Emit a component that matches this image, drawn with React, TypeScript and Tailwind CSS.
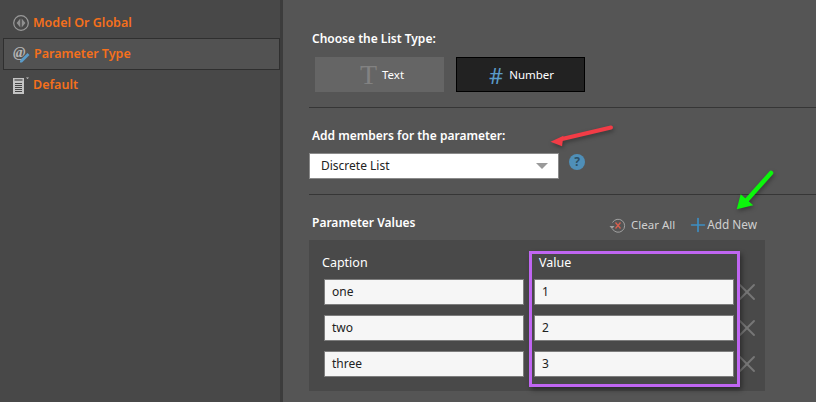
import { Plus, X } from 'lucide-react';

const rows = [
  { caption: 'one', value: '1' },
  { caption: 'two', value: '2' },
  { caption: 'three', value: '3' },
];

function ModelIcon() {
  return (
    <svg width="16" height="16" viewBox="0 0 16 16" className="shrink-0">
      <circle cx="8" cy="8" r="7.3" fill="none" stroke="#9a9a9a" strokeWidth="1.2" />
      <path d="M7.3 3.5v9L3.600 8zM8.700 3.500v9L12.400 8z" fill="#8f8f8f" />
    </svg>
  );
}

function ParamIcon() {
  return (
    <svg width="18" height="18" viewBox="0 0 18 18" className="shrink-0">
      <text x="0" y="12" fontSize="15" fontStyle="italic" fill="#b4b4b4" fontFamily="Liberation Serif, serif">@</text>
      <path d="M7 15.500l7.500-7.500 2 2-7.500 7.500H7z" fill="#5b9bc8" />
    </svg>
  );
}

function DefaultIcon() {
  return (
    <svg width="16" height="17" viewBox="0 0 16 17" className="shrink-0">
      <rect x="0" y="1" width="11" height="16" fill="#c4c4c4" />
      <path d="M2 6.500h7M2 8.500h7M2 10.500h7M2 12.500h7M2 14.500h7" stroke="#444" strokeWidth="1" />
      <path d="M1.500 3h8" stroke="#777" strokeWidth="2" />
      <path d="M13 0.500h3l-1.500 1.600z" fill="#c8c8c8" />
    </svg>
  );
}

function ClearIcon() {
  return (
    <svg width="17" height="17" viewBox="0 0 17 17" className="shrink-0">
      <path d="M3.500 5.500A6.500 6.500 0 1 1 3.500 12" fill="none" stroke="#a0a0a0" strokeWidth="1" />
      <path d="M0.500 9h5L3 12z" fill="#a0a0a0" />
      <path d="M6.500 5.500l5 6M11.500 5.500l-5 6" stroke="#d8604f" strokeWidth="1.300" />
    </svg>
  );
}

function CellInput({ text }: { text: string }) {
  return (
    <div className="flex h-[26px] w-[200px] items-center border border-[#7d7d7d] bg-[#f6f6f6] pl-[7px] text-[12px] text-[#222]">
      {text}
    </div>
  );
}

export default function App() {
  return (
    <div className="relative flex h-[402px] w-[816px] overflow-hidden bg-[#555555] font-['Noto_Sans','Open_Sans',sans-serif] text-[12px]">
      {/* Sidebar */}
      <div className="w-[283px] shrink-0 border-r-[3px] border-[#3c3c3c] bg-[#484848] pt-[8px] text-[12.5px] font-semibold text-[#f5701c]">
        <div className="flex h-[30px] items-center gap-[4px] pl-[13px]">
          <ModelIcon />
          <span>Model Or Global</span>
        </div>
        <div className="ml-[3px] flex h-[32px] items-center gap-[3px] border border-[#2f2f2f] bg-[#525252] pl-[9px]">
          <ParamIcon />
          <span>Parameter Type</span>
        </div>
        <div className="flex h-[30px] items-center gap-[4px] pl-[13px]">
          <DefaultIcon />
          <span>Default</span>
        </div>
      </div>

      {/* Main */}
      <div className="flex-1 pl-[26px] pt-[30px]">
        <div className="pl-[3px] font-semibold leading-[18px] text-white">Choose the List Type:</div>
        <div className="ml-[6px] mt-[9px] flex gap-[12px]">
          <div className="flex h-[35px] w-[129px] items-center justify-center gap-[5px] bg-[#656565] pl-[5px] text-[11.5px] text-white">
            <span className="font-['Liberation_Serif',serif] text-[28px] leading-none text-[#828282]">T</span>
            <span>Text</span>
          </div>
          <div className="flex h-[35px] w-[129px] items-center justify-center gap-[6px] border border-black bg-[#222222] pl-[2px] text-[11.5px] text-white">
            <span className="text-[22px] leading-none text-[#5b9bc8]">#</span>
            <span>Number</span>
          </div>
        </div>

        <div className="mt-[15px] border-t border-[#363636]" />

        <div className="mt-[19px] pl-[3px] font-semibold leading-[18px] text-white">Add members for the parameter:</div>
        <div className="mt-[8px] flex items-start gap-[10px]">
          <div className="flex h-[26px] w-[250px] items-center justify-between border border-[#8a8a8a] bg-white pl-[11px] pr-[10px] text-[#222]">
            <span>Discrete List</span>
            <span className="h-0 w-0 border-x-[6px] border-t-[6px] border-x-transparent border-t-[#9a9a9a]" />
          </div>
          <div className="mt-[1px] flex h-[16px] w-[16px] items-center justify-center rounded-full bg-[#4f8fb8] text-[12px] font-bold leading-none text-[#2c4f66]">?</div>
        </div>

        <div className="mt-[15px] border-t border-[#363636]" />

        <div className="flex h-[45px] items-center justify-between pl-[3px] pr-[59px] pt-[10px]">
          <span className="font-semibold text-white">Parameter Values</span>
          <div className="mt-[5px] flex items-center text-[#d0d0d0]">
            <ClearIcon />
            <span className="ml-[5px] text-[11.5px]">Clear All</span>
            <Plus size={22} strokeWidth={1.8} className="ml-[12px] text-[#3d8fc4]" />
            <span className="-ml-[2px] text-[11.8px]">Add New</span>
          </div>
        </div>

        {/* Values panel */}
        <div className="flex h-[151px] w-[456px] gap-[10px] bg-[#494949] pl-[15px] pt-[14px]">
          <div className="flex flex-col">
            <div className="-ml-[2px] h-[25px] text-[12.5px] leading-[18px] text-white">Caption</div>
            <div className="flex flex-col gap-[10px]">
              {rows.map((r) => (
                <CellInput key={r.caption} text={r.caption} />
              ))}
            </div>
          </div>
          <div className="flex flex-col">
            <div className="h-[25px] pl-[5px] text-[12.5px] leading-[18px] text-white">Value</div>
            <div className="flex flex-col gap-[10px]">
              {rows.map((r) => (
                <CellInput key={r.value} text={r.value} />
              ))}
            </div>
          </div>
          <div className="-ml-[11px] flex flex-col gap-[10px] pt-[25px]">
            {rows.map((r) => (
              <div key={r.value} className="flex h-[26px] items-center">
                <X size={28} strokeWidth={1.6} className="text-[#777777]" />
              </div>
            ))}
          </div>
        </div>
      </div>

      {/* Annotations drawn over the screenshot */}
      <div className="absolute left-[529px] top-[251px] h-[136px] w-[211px] border-[3px] border-[#c066f2] shadow-[2px_3px_5px_rgba(0,0,0,0.4)]" />
      <svg className="absolute left-0 top-0 drop-shadow-[1px_2px_2px_rgba(0,0,0,0.35)]" width="816" height="402" viewBox="0 0 816 402">
        <path d="M611 127.500L562 139" stroke="#f23c46" strokeWidth="4" strokeLinecap="round" />
        <path d="M550.500 141.700l13-6-1.500 10.500z" fill="#f23c46" />
        <path d="M771 173L746 201" stroke="#0cf50c" strokeWidth="4.500" strokeLinecap="round" />
        <path d="M736.700 209.300l4-15 12.500 11z" fill="#0cf50c" />
      </svg>
    </div>
  );
}
